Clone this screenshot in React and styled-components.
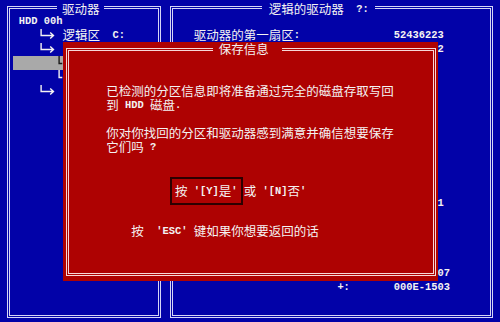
import React from "react";
import styled, { createGlobalStyle } from "styled-components";

const BLUE = "#0202a8";
const RED = "#ae0202";
const INK = "#f4f2f2";

const GlobalStyle = createGlobalStyle`
  html, body {
    margin: 0;
    padding: 0;
    background: ${BLUE};
    overflow: hidden;
  }
`;

const Screen = styled.div`
  position: relative;
  width: 500px;
  height: 322px;
  overflow: hidden;
  background: ${BLUE};
  color: ${INK};
  font-family: "Noto Sans CJK SC", "Noto Sans", sans-serif;
  font-size: 12.5px;
`;

const Panels = styled.div`
  display: flex;
  gap: 9.5px;
  padding-left: 7px;
`;

const Panel = styled.fieldset`
  box-sizing: border-box;
  width: ${(p) => p.$width}px;
  height: 318px;
  margin: 0;
  padding: 0;
  min-width: 0;
  border: 3px double #d6d6f6;
`;

const Title = styled.legend`
  box-sizing: border-box;
  margin-left: ${(p) => p.$offset}px;
  padding: ${(p) => p.$nudge || 0}px ${(p) => p.$padR}px 0 ${(p) => p.$padL}px;
  height: 14px;
  line-height: 14px;
  white-space: pre;
  display: flex;
  align-items: flex-start;
`;

const Row = styled.div`
  display: flex;
  align-items: center;
  height: 14px;
  line-height: 14px;
  margin-top: ${(p) => (p.$skip || 0) * 14 + (p.$gap || 0)}px;
  padding-left: ${(p) => p.$indent || 0}px;
  white-space: pre;
`;

const Highlight = styled(Row)`
  margin: 0 3px;
  background: #a9a9a9;
`;

const Label = styled.div`
  display: flex;
  width: 200px;
  flex-shrink: 0;
`;

const Han = styled.span`
  font-family: "Noto Sans CJK SC", sans-serif;
  font-size: 12.5px;
  line-height: 14px;
`;

const Asc = styled.span`
  font-family: "Liberation Mono", "DejaVu Sans Mono", monospace;
  font-size: 10.42px;
  font-weight: bold;
  line-height: 14px;
  white-space: pre;
`;

const Dialog = styled.div`
  position: absolute;
  left: 62.5px;
  top: 42px;
  width: 375px;
  height: 239px;
  box-sizing: border-box;
  padding: 0 2px 5px 3px;
  background: ${RED};
`;

const Frame = styled.fieldset`
  box-sizing: border-box;
  height: 100%;
  margin: 0;
  padding: 0;
  min-width: 0;
  border: 3px double #f6d8d8;
`;

const ButtonRow = styled(Row)`
  height: 28px;
`;

const Choice = styled.div`
  display: flex;
  align-items: center;
  box-sizing: border-box;
  height: 28px;
  padding: 0 3px;
  border: 2px solid #2c0000;
`;

const After = styled.div`
  display: flex;
  margin-left: 1.25px;
`;

const BranchSvg = styled.svg`
  flex-shrink: 0;
  display: block;
`;

// split text into ascii runs (narrow cells) and CJK runs (wide cells)
const Mixed = ({ children }) =>
  String(children)
    .split(/([\x20-\x7e]+)/)
    .filter(Boolean)
    .map((part, i) =>
      /^[\x20-\x7e]+$/.test(part) ? (
        <Asc key={i}>{part}</Asc>
      ) : (
        <Han key={i}>{part}</Han>
      )
    );

const Branch = ({ arrow, color = INK }) => {
  const w = arrow ? 18.75 : 6.25;
  return (
    <BranchSvg width={w} height="14" viewBox={`0 0 ${w} 14`}>
      <path
        d={arrow ? "M3.1 1V7.5H15.5M12.2 4.4L15.5 7.5L12.2 10.6" : "M3.1 0V7.5H6.25"}
        stroke={color}
        strokeWidth="1.4"
        fill="none"
      />
    </BranchSvg>
  );
};

const App = () => {
  return (
    <>
      <GlobalStyle />
      <Screen>
        <Panels>
          <Panel $width={153.5}>
            <Title $offset={47} $padL={5} $padR={4.5} $nudge={2}>
              <Mixed>驱动器</Mixed>
            </Title>
            <Row $indent={8.75}>
              <Mixed>HDD 00h</Mixed>
            </Row>
            <Row $indent={27.5}>
              <Branch arrow />
              <Mixed> 逻辑区  C:</Mixed>
            </Row>
            <Row $indent={27.5}>
              <Branch arrow />
            </Row>
            <Highlight $indent={43.25}>
              <Branch color="#1a1a1a" />
            </Highlight>
            <Row $indent={46.25}>
              <Branch />
            </Row>
            <Row $indent={27.5}>
              <Branch arrow />
            </Row>
          </Panel>

          <Panel $width={322.5}>
            <Title $offset={89} $padL={6.75} $padR={6.25} $nudge={2}>
              <Mixed>逻辑的驱动器  ?:</Mixed>
            </Title>
            <Row $indent={20.75} $skip={1}>
              <Label>
                <Mixed>驱动器的第一扇区:</Mixed>
              </Label>
              <Mixed>52436223</Mixed>
            </Row>
            <Row $indent={20.75}>
              <Label />
              <Mixed>{"       2"}</Mixed>
            </Row>
            <Row $indent={20.75} $skip={10}>
              <Label />
              <Mixed>{"       1"}</Mixed>
            </Row>
            <Row $indent={20.75} $skip={4}>
              <Label />
              <Mixed>{"       07"}</Mixed>
            </Row>
            <Row $indent={20.75}>
              <Label>
                <Mixed>{"                       +:"}</Mixed>
              </Label>
              <Mixed>000E-1503</Mixed>
            </Row>
          </Panel>
        </Panels>

        <Dialog>
          <Frame>
            <Title $offset={144.5} $padL={5.75} $padR={13.25}>
              <Mixed>保存信息</Mixed>
            </Title>
            <Row $indent={37.75} $skip={2}>
              <Mixed>已检测的分区信息即将准备通过完全的磁盘存取写回</Mixed>
            </Row>
            <Row $indent={37.75}>
              <Mixed>到 HDD 磁盘.</Mixed>
            </Row>
            <Row $indent={37.75} $skip={1}>
              <Mixed>你对你找回的分区和驱动器感到满意并确信想要保存</Mixed>
            </Row>
            <Row $indent={37.75}>
              <Mixed>它们吗 ?</Mixed>
            </Row>
            <ButtonRow $indent={101.5} $gap={23}>
              <Choice>
                <Mixed>按 '[Y]是'</Mixed>
              </Choice>
              <After>
                <Mixed>或 '[N]否'</Mixed>
              </After>
            </ButtonRow>
            <Row $indent={62.75} $gap={19}>
              <Mixed>按  'ESC' 键如果你想要返回的话</Mixed>
            </Row>
          </Frame>
        </Dialog>
      </Screen>
    </>
  );
};

export default App;
